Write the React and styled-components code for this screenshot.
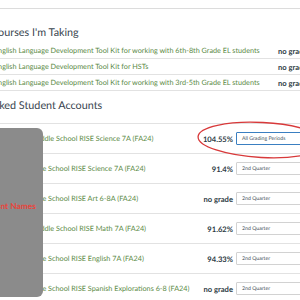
import React from "react";
import styled, { createGlobalStyle } from "styled-components";

const GlobalStyle = createGlobalStyle`
  html, body { margin: 0; padding: 0; background: #fff; }
  body {
    font-family: Lato, "Open Sans", Arial, sans-serif;
    overflow: hidden;
    text-rendering: geometricPrecision;
  }
`;

const Page = styled.div`
  position: relative;
  width: 300px;
  height: 300px;
  overflow: hidden;
  background: #fff;
`;

const TopRule = styled.div`
  margin-top: 8px;
  height: 1px;
  background: #dcdcdc;
`;

const Content = styled.div`
  margin-left: -12px;
  width: 360px;
`;

const Heading = styled.h2`
  margin: ${(p) => p.$mt}px 0 ${(p) => p.$mb}px ${(p) => p.$indent || 0}px;
  font-size: 10.8px;
  line-height: 16px;
  font-weight: 400;
  color: #3a4650;
  white-space: nowrap;
`;

const CourseTable = styled.div`
  display: flex;
  flex-direction: column;
`;

const CourseRow = styled.div`
  display: grid;
  grid-template-columns: 284px 1fr;
  align-items: center;
  height: 16px;
  border-bottom: 1px solid #e2e2e2;
  box-sizing: border-box;
  font-size: 7.25px;
  padding-left: 6px;
`;

const CourseLink = styled.span`
  color: #5a8a45;
  white-space: nowrap;
`;

const GradeText = styled.span`
  color: #2d3b45;
  font-weight: 700;
  font-size: 7.6px;
  white-space: nowrap;
  text-align: ${(p) => p.$align || "left"};
`;

const StudentTable = styled.div`
  display: flex;
  flex-direction: column;
  border-top: 1px solid #e2e2e2;
`;

const StudentRow = styled.div`
  display: grid;
  grid-template-columns: 156px 81px 110px;
  align-items: center;
  height: 30px;
  border-bottom: 1px solid #e2e2e2;
  box-sizing: border-box;
  font-size: 7.25px;
  padding-left: 8px;
`;

const PeriodSelect = styled.div`
  height: 13px;
  margin-left: 3px;
  box-sizing: border-box;
  border: 1px solid ${(p) => (p.$focus ? "#3a7fc1" : "#d2d2d2")};
  border-radius: 1px;
  display: flex;
  align-items: center;
  padding-left: 5px;
  font-size: 5.2px;
  color: #44505a;
  background: #fff;
  white-space: nowrap;
`;

const Redaction = styled.div`
  position: absolute;
  left: -28px;
  top: 128px;
  width: 71px;
  height: 169px;
  background: #8b8b8b;
  border-radius: 6px;
  display: flex;
  align-items: center;
  justify-content: center;
`;

const RedactionLabel = styled.span`
  color: #e8453c;
  font-weight: 700;
  font-size: 8.4px;
  white-space: nowrap;
  margin-bottom: 14px;
`;

const Annotation = styled.svg`
  position: absolute;
  left: 0;
  top: 0;
  pointer-events: none;
`;

const courses = [
  "English Language Development Tool Kit for working with 6th-8th Grade EL students",
  "English Language Development Tool Kit for HSTs",
  "English Language Development Tool Kit for working with 3rd-5th Grade EL students",
];

const students = [
  { name: "Jane Doe - Middle School RISE Science 7A (FA24)", grade: "104.55%", period: "All Grading Periods", focus: true },
  { name: "Jane D - Middle School RISE Science 7A (FA24)", grade: "91.4%", period: "2nd Quarter" },
  { name: "Jane D - Middle School RISE Art 6-8A (FA24)", grade: "no grade", period: "2nd Quarter" },
  { name: "Jane Doe - Middle School RISE Math 7A (FA24)", grade: "91.62%", period: "2nd Quarter" },
  { name: "Jane D - Middle School RISE English 7A (FA24)", grade: "94.33%", period: "2nd Quarter" },
  { name: "Jane D - Middle School RISE Spanish Explorations 6-8 (FA24)", grade: "no grade", period: "2nd Quarter" },
];

export default function App() {
  return (
    <Page>
      <GlobalStyle />
      <TopRule />
      <Content>
        <Heading $mt={16} $mb={2} $indent={3}>Courses I'm Taking</Heading>
        <CourseTable>
          {courses.map((c) => (
            <CourseRow key={c}>
              <CourseLink>{c}</CourseLink>
              <GradeText>no grade</GradeText>
            </CourseRow>
          ))}
        </CourseTable>
        <Heading $mt={7} $mb={9} $indent={-3}>Linked Student Accounts</Heading>
        <StudentTable>
          {students.map((s, i) => (
            <StudentRow key={i}>
              <CourseLink>{s.name}</CourseLink>
              <GradeText $align="right">{s.grade}</GradeText>
              <PeriodSelect $focus={s.focus}>{s.period}</PeriodSelect>
            </StudentRow>
          ))}
        </StudentTable>
      </Content>
      <Redaction>
        <RedactionLabel>Student Names</RedactionLabel>
      </Redaction>
      <Annotation width="300" height="300" viewBox="0 0 300 300">
        <ellipse cx="262" cy="140" rx="64" ry="17.5" fill="none" stroke="#d8393a" strokeWidth="1.3" transform="rotate(3 262 140)" />
      </Annotation>
    </Page>
  );
}
